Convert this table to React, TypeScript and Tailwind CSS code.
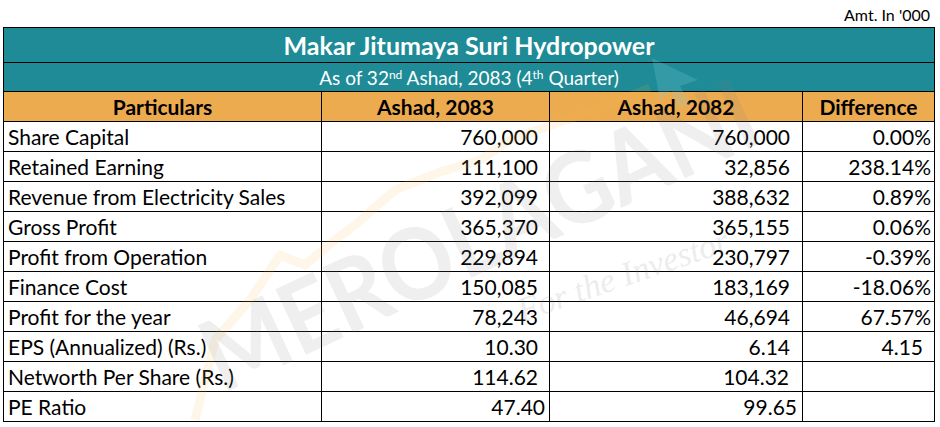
type Row = {
  label: string;
  a: string;
  b: string;
  d: string;
  aPad: string;
  bPad: string;
  dPad: string;
};

const rows: Row[] = [
  { label: "Share Capital", a: "760,000", b: "760,000", d: "0.00%", aPad: "pr-[11px]", bPad: "pr-[12px]", dPad: "pr-[3px]" },
  { label: "Retained Earning", a: "111,100", b: "32,856", d: "238.14%", aPad: "pr-[11px]", bPad: "pr-[12px]", dPad: "pr-[3px]" },
  { label: "Revenue from Electricity Sales", a: "392,099", b: "388,632", d: "0.89%", aPad: "pr-[11px]", bPad: "pr-[12px]", dPad: "pr-[3px]" },
  { label: "Gross Profit", a: "365,370", b: "365,155", d: "0.06%", aPad: "pr-[11px]", bPad: "pr-[12px]", dPad: "pr-[3px]" },
  { label: "Profit from Operation", a: "229,894", b: "230,797", d: "-0.39%", aPad: "pr-[11px]", bPad: "pr-[12px]", dPad: "pr-[3px]" },
  { label: "Finance Cost", a: "150,085", b: "183,169", d: "-18.06%", aPad: "pr-[11px]", bPad: "pr-[12px]", dPad: "pr-[3px]" },
  { label: "Profit for the year", a: "78,243", b: "46,694", d: "67.57%", aPad: "pr-[11px]", bPad: "pr-[12px]", dPad: "pr-[3px]" },
  { label: "EPS (Annualized) (Rs.)", a: "10.30", b: "6.14", d: "4.15", aPad: "pr-[11px]", bPad: "pr-[12px]", dPad: "pr-[11px]" },
  { label: "Networth Per Share (Rs.)", a: "114.62", b: "104.32", d: "", aPad: "pr-[11px]", bPad: "pr-[13px]", dPad: "pr-[3px]" },
  { label: "PE Ratio", a: "47.40", b: "99.65", d: "", aPad: "pr-[4px]", bPad: "pr-[5px]", dPad: "pr-[3px]" },
];

function Watermark() {
  return (
    <svg
      className="pointer-events-none absolute left-0 top-0"
      width="940"
      height="427"
      viewBox="0 0 940 427"
    >
      <polyline
        points="195,420 215,340 250,300 280,255 305,265 335,240 355,225 395,190 440,172 480,160 510,140 560,122 610,105 650,88"
        fill="none"
        stroke="#f5b342"
        strokeWidth="9"
        strokeLinejoin="round"
        opacity="0.12"
      />
      <polygon points="652,58 698,80 680,86 690,104 680,108 671,91 660,100" fill="#7fd0e0" opacity="0.22" />
      <text
        transform="translate(222 394) rotate(-25)"
        fontFamily="Lato, sans-serif"
        fontWeight="700"
        fontSize="100"
        fill="#808080"
        opacity="0.12"
        textLength="600"
        lengthAdjust="spacingAndGlyphs"
      >
        MEROLAGANI
      </text>
      <text
        transform="translate(522 322) rotate(-19)"
        fontFamily="'Liberation Serif', serif"
        fontStyle="italic"
        fontSize="34"
        fill="#808080"
        opacity="0.14"
      >
        For the Investor
      </text>
    </svg>
  );
}

export default function App() {
  return (
    <div className="relative h-[427px] w-[940px] overflow-hidden bg-white font-[Lato,_sans-serif] text-black">
      <div className="flex h-[27px] items-end justify-end pb-[4px] pr-[10px] text-[16px] leading-none">
        Amt. In '000
      </div>
      <table className="ml-[3px] w-[931px] table-fixed border-collapse">
        <colgroup>
          <col className="w-[318px]" />
          <col className="w-[228px]" />
          <col className="w-[253px]" />
          <col className="w-[132px]" />
        </colgroup>
        <tbody>
          <tr className="h-[35px] bg-[#1e8b96]">
            <td colSpan={4} className="border border-black p-0 text-center text-[25px] font-bold leading-none text-white">
              Makar Jitumaya Suri Hydropower
            </td>
          </tr>
          <tr className="h-[29px] bg-[#1e8b96]">
            <td colSpan={4} className="border border-black p-0 text-center text-[19px] leading-none text-white">
              As of 32<sup className="text-[12px]">nd</sup> Ashad, 2083 (4<sup className="text-[12px]">th</sup> Quarter)
            </td>
          </tr>
          <tr className="h-[30px] bg-[#edab50] text-[21px] font-bold leading-none">
            <td className="border border-black p-0 text-center">Particulars</td>
            <td className="border border-black p-0 text-center">Ashad, 2083</td>
            <td className="border border-black p-0 text-center">Ashad, 2082</td>
            <td className="border border-black p-0 text-center">Difference</td>
          </tr>
          {rows.map((r) => (
            <tr key={r.label} className="h-[30px] text-[21px] leading-none">
              <td className="border border-black py-0 pl-[4px]">{r.label}</td>
              <td className={`border border-black py-0 text-right ${r.aPad}`}>{r.a}</td>
              <td className={`border border-black py-0 text-right ${r.bPad}`}>{r.b}</td>
              <td className={`border border-black py-0 text-right ${r.dPad}`}>{r.d}</td>
            </tr>
          ))}
        </tbody>
      </table>
      <Watermark />
    </div>
  );
}
